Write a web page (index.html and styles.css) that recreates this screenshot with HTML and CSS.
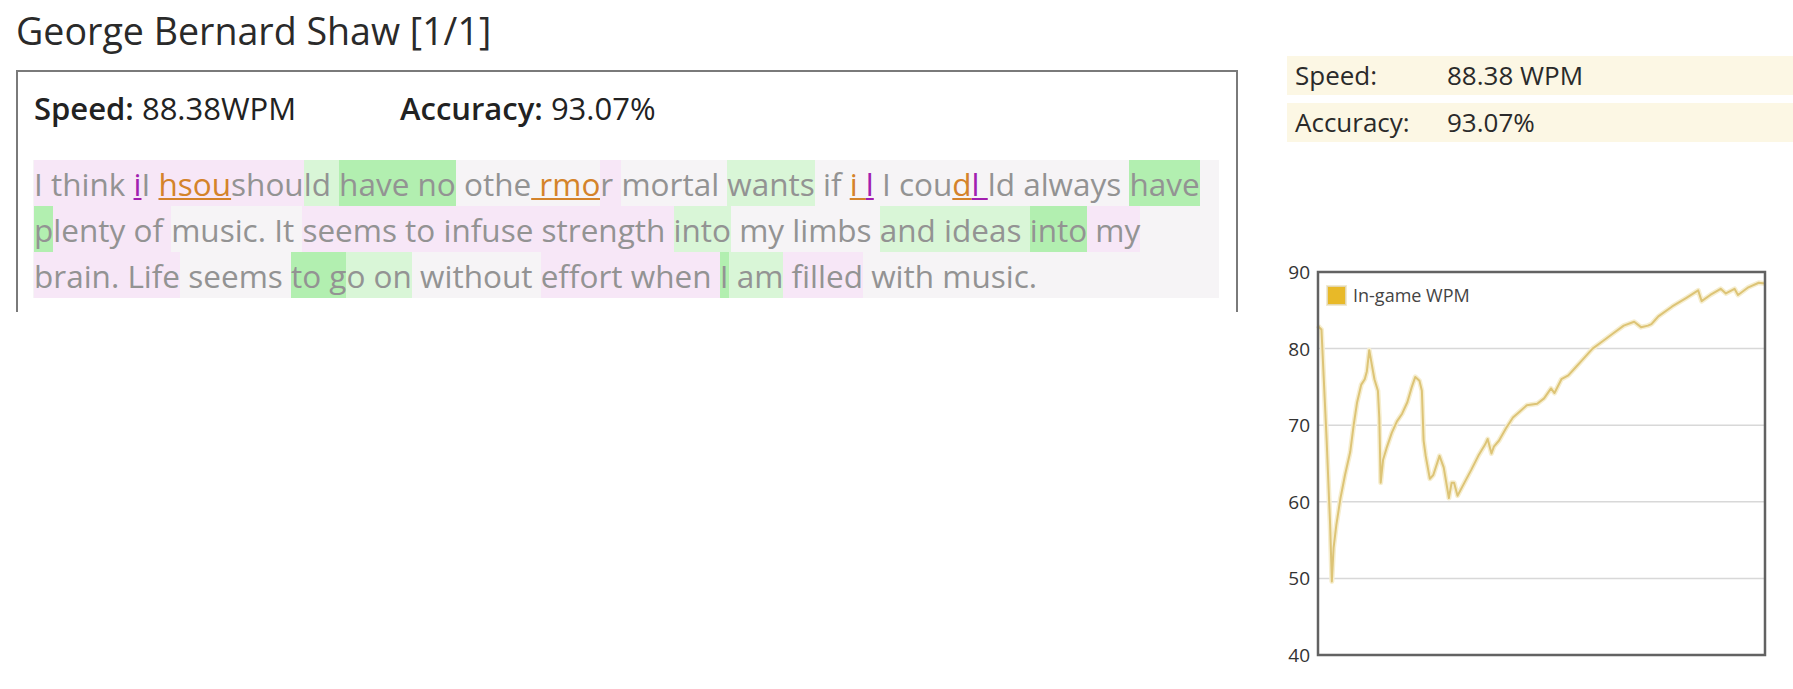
FILE: index.html
```html
<!DOCTYPE html>
<html lang="en">
<head>
<meta charset="utf-8">
<title>George Bernard Shaw [1/1]</title>
<link rel="stylesheet" href="styles.css">
</head>
<body>
<div class="page">
  <section class="left">
    <h1 class="title">George Bernard Shaw [1/1]</h1>
    <div class="result-box">
      <div class="stats">
        <span class="stat"><b>Speed:</b> 88.38WPM</span>
        <span class="stat"><b>Accuracy:</b> 93.07%</span>
      </div>
      <p class="typed"><span class="pk">I think </span><span class="pk"><span class="ep">i</span>I </span><span class="pk"><span class="eo">hsou</span>shou</span><span class="g1">ld </span><span class="g2">have no</span><span class="g0"> othe</span><span class="eo"> rmo</span><span class="pk">r </span><span class="g0">mortal </span><span class="g1">wants</span><span class="g0"> if </span><span class="eo">i </span><span class="ep">l</span><span class="g0"> I cou</span><span class="eo">d</span><span class="ep">l </span><span class="g0">ld always </span><span class="g2">have</span><br><span class="g2">p</span><span class="pk">lenty of </span><span class="g0">music. It </span><span class="pk">seems to infuse strength </span><span class="g1">into</span><span class="g0"> my limbs </span><span class="g1">and ideas </span><span class="g2">into</span><span class="pk"> my</span><br><span class="pk">brain. Life</span><span class="g0"> seems </span><span class="g2">to g</span><span class="g1">o on</span><span class="g0"> without </span><span class="pk">effort when </span><span class="g2">I</span><span class="g1"> am</span><span class="pk"> filled</span><span class="g0"> with music.</span></p>
    </div>
  </section>

  <aside class="right">
    <div class="summary">
      <div class="row"><span class="label">Speed:</span><span class="value">88.38 WPM</span></div>
      <div class="row"><span class="label">Accuracy:</span><span class="value">93.07%</span></div>
    </div>

    <div class="chart">
      <div class="yaxis">
        <span>90</span><span>80</span><span>70</span><span>60</span><span>50</span><span>40</span>
      </div>
      <div class="plot">
        <svg class="plot-svg" viewBox="197 0 1291 50" preserveAspectRatio="none" width="447" height="383">
          <g class="grid">
            <line x1="197" y1="10" x2="1488" y2="10"/>
            <line x1="197" y1="20" x2="1488" y2="20"/>
            <line x1="197" y1="30" x2="1488" y2="30"/>
            <line x1="197" y1="40" x2="1488" y2="40"/>
          </g>
          <polyline class="glow" points="197,7 200,7.2 207,7.5 222,22 232,33 237,40.4 242,36 250,33 262,29.5 275,26.5 290,23.5 300,20 310,17 322,14.7 332,14 338,13 345,10.2 352,12 360,14 370,15.5 374,19 378,27.5 385,24.5 395,23 410,21 425,19.5 440,18.5 455,17 468,15 478,13.7 490,14.2 497,15.5 502,22 508,24 520,27 530,26.5 548,24 560,25.5 575,29.5 583,27.5 590,27.5 600,29.2 620,27.5 640,25.8 660,24 680,22.5 687,21.8 698,23.7 705,22.8 720,22 740,20.4 760,19 780,18.2 800,17.4 830,17.2 850,16.5 870,15.2 880,15.8 900,14 920,13.5 940,12.5 960,11.5 990,10 1020,9 1050,8 1080,7 1110,6.5 1130,7.2 1150,7 1160,6.8 1170,6.3 1180,5.8 1220,4.5 1260,3.4 1295,2.4 1305,3.8 1330,3 1360,2.2 1375,2.8 1400,2.2 1410,3 1440,2 1470,1.4 1488,1.5"/>
          <polyline class="line" points="197,7 200,7.2 207,7.5 222,22 232,33 237,40.4 242,36 250,33 262,29.5 275,26.5 290,23.5 300,20 310,17 322,14.7 332,14 338,13 345,10.2 352,12 360,14 370,15.5 374,19 378,27.5 385,24.5 395,23 410,21 425,19.5 440,18.5 455,17 468,15 478,13.7 490,14.2 497,15.5 502,22 508,24 520,27 530,26.5 548,24 560,25.5 575,29.5 583,27.5 590,27.5 600,29.2 620,27.5 640,25.8 660,24 680,22.5 687,21.8 698,23.7 705,22.8 720,22 740,20.4 760,19 780,18.2 800,17.4 830,17.2 850,16.5 870,15.2 880,15.8 900,14 920,13.5 940,12.5 960,11.5 990,10 1020,9 1050,8 1080,7 1110,6.5 1130,7.2 1150,7 1160,6.8 1170,6.3 1180,5.8 1220,4.5 1260,3.4 1295,2.4 1305,3.8 1330,3 1360,2.2 1375,2.8 1400,2.2 1410,3 1440,2 1470,1.4 1488,1.5"/>
          <rect class="frame" x="197" y="0" width="1291" height="50"/>
        </svg>
        <div class="legend"><span class="swatch"></span><span class="legend-text">In-game WPM</span></div>
      </div>
    </div>
  </aside>
</div>
</body>
</html>
```

FILE: styles.css
```css
html, body {
  margin: 0;
  padding: 0;
  background: #ffffff;
}

body {
  font-family: "Open Sans", "DejaVu Sans", sans-serif;
  color: #222;
}

.page {
  display: flex;
  align-items: flex-start;
  width: 1793px;
}

.left {
  width: 1222px;
  margin-left: 16px;
  flex: none;
}

.title {
  margin: 10px 0 19px 0;
  font-size: 37.6px;
  line-height: 41px;
  font-weight: 400;
  color: #2a2a2a;
  letter-spacing: 0;
}

.result-box {
  border: 2px solid #7a7a7a;
  border-bottom: none;
  padding: 18px 17px 14px 15px;
  height: 242px;
  box-sizing: border-box;
}

.stats {
  display: grid;
  grid-template-columns: 366px auto;
  font-size: 31px;
  line-height: 36px;
  color: #222;
  padding-left: 1px;
}

.stats b {
  font-weight: 600;
}

.typed {
  margin: 34px 0 0 0;
  background: #f6f4f6;
  color: #939393;
  font-size: 31.5px;
  line-height: 46px;
  white-space: nowrap;
  padding-left: 1px;
  overflow: hidden;
}

.typed span {
  padding: 1.5px 0 1.5px 0;
}

.typed span span {
  padding: 0;
}

.pk { background: #f7e7f7; }
.g0 { background: #f6f4f6; }
.g1 { background: #d9f6d7; }
.g2 { background: #b2efb0; }

.eo {
  color: #d4832a;
  text-decoration: underline;
  text-decoration-thickness: 2px;
  text-underline-offset: 3px;
}

.ep {
  color: #a21fb0;
  text-decoration: underline;
  text-decoration-thickness: 2px;
  text-underline-offset: 3px;
}

.right {
  flex: none;
  width: 506px;
  margin-left: 49px;
}

.summary {
  margin-top: 56px;
  display: flex;
  flex-direction: column;
  gap: 8px;
}

.row {
  display: flex;
  background: #fcf7e4;
  height: 39px;
  line-height: 39px;
  font-size: 26px;
  color: #2a2a2a;
}

.label {
  width: 152px;
  padding-left: 8px;
}

.chart {
  display: flex;
  margin-top: 130px;
}

.yaxis {
  width: 23px;
  margin-right: 8px;
  height: 405px;
  margin-top: -11px;
  display: flex;
  flex-direction: column;
  justify-content: space-between;
  align-items: flex-end;
  font-size: 19px;
  line-height: 22px;
  color: #333;
}

.plot {
  position: relative;
  width: 447px;
  height: 383px;
}

.plot-svg {
  display: block;
  overflow: visible;
}

.grid line {
  stroke: #d8d8d8;
  stroke-width: 1.5;
  vector-effect: non-scaling-stroke;
}

.frame {
  fill: none;
  stroke: #626262;
  stroke-width: 2.5;
  vector-effect: non-scaling-stroke;
}

.glow {
  fill: none;
  stroke: #f6eed0;
  stroke-width: 5;
  stroke-linejoin: round;
  vector-effect: non-scaling-stroke;
}

.line {
  fill: none;
  stroke: #ddc476;
  stroke-width: 2;
  stroke-linejoin: round;
  vector-effect: non-scaling-stroke;
}

.legend {
  position: absolute;
  left: 9px;
  top: 12px;
  display: flex;
  align-items: center;
  gap: 7px;
}

.swatch {
  width: 17px;
  height: 17px;
  background: #e8b928;
  border: 1px solid #e2d6b0;
  box-shadow: 0 0 0 1px #f1ead0;
}

.legend-text {
  font-size: 18px;
  line-height: 22px;
  color: #444;
}
```
